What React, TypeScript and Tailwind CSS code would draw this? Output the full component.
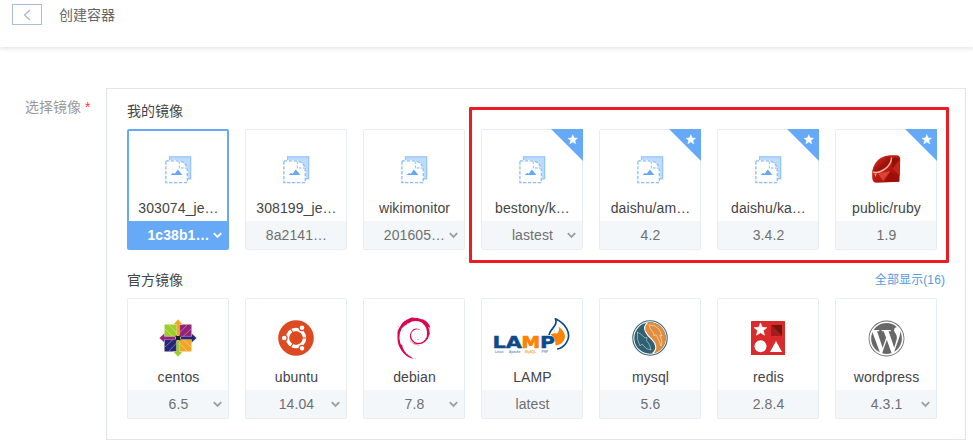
import React from "react";
import { SiDebian } from "react-icons/si";
import { FaWordpress } from "react-icons/fa";

const STAR = "M6 .6 7.5 4.3 11.4 4.6 8.4 7.1 9.4 11 6 8.9 2.6 11 3.6 7.1 .6 4.6 4.5 4.3Z";

function DefaultIcon() {
  return (
    <svg width="27" height="28" viewBox="0 0 27 28" fill="none" className="relative top-px">
      <rect x="4.5" y="0.8" width="21.2" height="22" fill="#bfdbfb" stroke="#93c3fa" strokeWidth="1.2" />
      <path d="M0 4H14L23 13V28H0Z" fill="#fff" />
      <path d="M0.9 4.9H13Q22 5.5 22.3 15V26.6H0.9Z" fill="#fff" stroke="#8abdf8" strokeWidth="1.3" strokeDasharray="3.4 1.5" />
      <path d="M14.4 5.5V12H21.5" stroke="#a3ccfa" strokeWidth="1.3" strokeDasharray="2.6 1.4" />
      <path d="M5.5 18.9 8 17 9.8 17.8 12.8 13.6 17.4 18.9Z" fill="#62a7f8" />
    </svg>
  );
}

function RubyIcon() {
  return (
    <svg width="30" height="30" viewBox="0 0 30 30">
      <defs>
        <linearGradient id="ruby" x1="0" y1="0" x2="1" y2="1">
          <stop offset="0" stopColor="#d5392c" />
          <stop offset="0.45" stopColor="#c01b12" />
          <stop offset="1" stopColor="#8d0c06" />
        </linearGradient>
        <linearGradient id="rubyTop" x1="0" y1="0" x2="1" y2="1">
          <stop offset="0" stopColor="#d63a2c" />
          <stop offset="0.6" stopColor="#9e0e08" />
          <stop offset="1" stopColor="#b91b12" />
        </linearGradient>
      </defs>
      <path d="M9.5 4Q15 .8 20 1.2L26 1.2Q29.6 2 29.2 6L28.4 27.8 5 28.8Q1.2 28.5 1.2 23V17Q3 8 9.5 4Z" fill="url(#ruby)" />
      <path d="M2 17Q4.5 8 11 4.2 18 1 20 4 20.5 9 14 14 7 19 2 17Z" fill="url(#rubyTop)" />
      <path d="M20.2 3.2 28.6 4.5 21.5 14.5Z" fill="#96100a" />
      <path d="M7 19.5 12 27 19.5 17Z" fill="#d94432" />
      <path d="M20 17 28.3 27.3 13.5 27.7Z" fill="#9c0f09" />
      <path d="M21.5 14.5 28.8 6V22Z" fill="#c4241a" />
      <path d="M2 17.8Q7 20 14.5 14.6 20.4 10 20.6 3.6" fill="none" stroke="#f0b9ac" strokeWidth="1.4" />
      <path d="M3 19.5 5.5 19.6 4.8 23Z" fill="#eda092" />
    </svg>
  );
}

function CentosIcon() {
  return (
    <svg width="38" height="38" viewBox="0 0 38 38">
      <rect x="5.5" y="5.5" width="12.5" height="12.5" fill="#9ccd2a" />
      <rect x="20" y="5.5" width="12.5" height="12.5" fill="#932279" />
      <rect x="5.5" y="20" width="12.5" height="12.5" fill="#262577" />
      <rect x="20" y="20" width="12.5" height="12.5" fill="#efa724" />
      <g fill="none" stroke="#fff" strokeOpacity=".5" strokeWidth=".7">
        <path d="M6 10 15 18.5M10 6l8.5 9M32 10l-9 8.5M28 6l-8.5 9M6 28l9-8.5M10 32l8.5-9M32 28l-9-8.5M28 32l-8.5-9" />
      </g>
      <path d="M17.4 17V5.5H14.2L19 .3 23.8 5.5H20.6V17Z" fill="#efa724" stroke="#fff" strokeWidth=".3" />
      <path d="M21 17.4H32.5V14.2L37.7 19 32.5 23.8V20.6H21Z" fill="#262577" stroke="#fff" strokeWidth=".3" />
      <path d="M17.4 21V32.5H14.2L19 37.7 23.8 32.5H20.6V21Z" fill="#9ccd2a" stroke="#fff" strokeWidth=".3" />
      <path d="M17 17.4H5.5V14.2L.3 19 5.5 23.8V20.6H17Z" fill="#932279" stroke="#fff" strokeWidth=".3" />
      <rect x="16.6" y="16.6" width="4.8" height="4.8" fill="#181818" />
      <path d="M18.3 16.6h1.4M18.3 21.4h1.4M16.6 18.3v1.4M21.4 18.3v1.4" stroke="#fff" strokeWidth=".9" />
    </svg>
  );
}

function UbuntuIcon() {
  return (
    <svg width="36" height="36" viewBox="0 0 36 36">
      <circle cx="18" cy="18" r="17.8" fill="#dd4a21" />
      <circle cx="18" cy="18" r="8.5" fill="none" stroke="#fff" strokeWidth="3.6" />
      <g stroke="#dd4a21" strokeWidth="1.1">
        <path d="M18 18H31M18 18 11.5 6.8M18 18 11.5 29.2" />
      </g>
      <circle cx="18" cy="18" r="6.5" fill="#dd4a21" />
      <g fill="#fff" stroke="#dd4a21" strokeWidth="1.2">
        <circle cx="6.2" cy="18" r="2.9" />
        <circle cx="24" cy="7.8" r="2.9" />
        <circle cx="24" cy="28.2" r="2.9" />
      </g>
    </svg>
  );
}

function LampIcon() {
  return (
    <svg width="80" height="40" viewBox="0 0 80 40" className="shrink-0">
      <g fontFamily="'DejaVu Sans', sans-serif" fontWeight="700" fontSize="15.5">
        <text x="0.5" y="30" textLength="29.5" lengthAdjust="spacingAndGlyphs" fill="#0c4a8c" stroke="#0c4a8c" strokeWidth=".4">LA</text>
        <text x="29.5" y="30" textLength="18.5" lengthAdjust="spacingAndGlyphs" fill="#ff8205" stroke="#ff8205" strokeWidth=".7">M</text>
        <text x="48" y="30" textLength="15" lengthAdjust="spacingAndGlyphs" fill="#0c4a8c" stroke="#0c4a8c" strokeWidth=".4">P</text>
      </g>
      <g fontFamily="'Liberation Sans', sans-serif" fontSize="3.2" fontWeight="700" fill="#7d95b4">
        <text x="3" y="35.3">Linux</text>
        <text x="17" y="35.3">Apache</text>
        <text x="33" y="35.3" fill="#ff9d3b">MySQL</text>
        <text x="49.5" y="35.3">PHP</text>
      </g>
      <path d="M66.5 8.5Q73.5 14 73 19 72 26 63.5 27.5 64 20 58.5 16.5 62.5 14.5 65 15.5 68 13 66.5 8.5Z" fill="#ff8205" />
      <path d="M57 17C58 10 66 9 63.5 .8 74 6 79 15 75.5 22.5 73 28.5 67.5 31 65 31" fill="none" stroke="#0c4a8c" strokeWidth="1.7" />
    </svg>
  );
}

function MysqlIcon() {
  return (
    <svg width="36" height="36" viewBox="0 0 36 36">
      <circle cx="18" cy="18" r="17.2" fill="#fff" stroke="#3b6675" strokeWidth="1.1" />
      <circle cx="18" cy="18" r="15.7" fill="#2f6172" />
      <path d="M15.4 2.5C8.5 9 16 16 19.8 19.4 24.5 24 25.5 29 20.5 33.5A15.7 15.7 0 0 0 15.4 2.5Z" fill="#e08e3e" />
      <path d="M15.4 2.5C8.5 9 16 16 19.8 19.4 24.5 24 25.5 29 20.5 33.5" fill="none" stroke="#fff" strokeWidth="1.1" />
      <path d="M17 5Q23 4.5 27 9L30 16 27.7 15Q31 22 29 26M17 5Q17.5 9 21.5 13L22 16 24 14.5Q27 20 29 26" fill="none" stroke="#fff" strokeOpacity=".65" strokeWidth=".7" />
      <path d="M5.5 12Q4.5 20 8 26L10 24Q14 30 19 30M5.5 12Q9 14 13 18L15 17.5 14.5 20.5Q18 24 19 30" fill="none" stroke="#fff" strokeOpacity=".65" strokeWidth=".7" />
    </svg>
  );
}

function RedisIcon() {
  return (
    <svg width="34" height="34" viewBox="0 0 34 34">
      <rect width="34" height="34" rx=".5" fill="#d92b2b" />
      <path d={STAR} transform="translate(2.4 1.2) scale(1.18)" fill="#fff" stroke="#fff" strokeWidth=".5" />
      <path d="M20 4H31V15Z" fill="#741411" />
      <path d="M20 4V15H31Z" fill="#a51d1b" />
      <circle cx="9.5" cy="25.2" r="6" fill="#fff" />
      <path d="M25 20 31 31H19Z" fill="#fff" />
    </svg>
  );
}

type Item = {
  name: string;
  tag: string;
  icon: React.ReactNode;
  menu?: boolean;
  starred?: boolean;
  selected?: boolean;
};

const mine: Item[] = [
  { name: "303074_je…", tag: "1c38b1…", icon: <DefaultIcon />, menu: true, selected: true },
  { name: "308199_je…", tag: "8a2141…", icon: <DefaultIcon /> },
  { name: "wikimonitor", tag: "201605…", icon: <DefaultIcon />, menu: true },
  { name: "bestony/k…", tag: "lastest", icon: <DefaultIcon />, menu: true, starred: true },
  { name: "daishu/am…", tag: "4.2", icon: <DefaultIcon />, starred: true },
  { name: "daishu/ka…", tag: "3.4.2", icon: <DefaultIcon />, starred: true },
  { name: "public/ruby", tag: "1.9", icon: <RubyIcon />, starred: true },
];

const official: Item[] = [
  { name: "centos", tag: "6.5", icon: <CentosIcon />, menu: true },
  { name: "ubuntu", tag: "14.04", icon: <UbuntuIcon />, menu: true },
  { name: "debian", tag: "7.8", icon: <SiDebian size={42} color="#d70751" className="shrink-0" />, menu: true },
  { name: "LAMP", tag: "latest", icon: <LampIcon /> },
  { name: "mysql", tag: "5.6", icon: <MysqlIcon /> },
  { name: "redis", tag: "2.8.4", icon: <RedisIcon /> },
  { name: "wordpress", tag: "4.3.1", icon: <FaWordpress size={37} color="#686868" />, menu: true },
];

function Card({ item }: { item: Item }) {
  return (
    <div
      className={`relative flex h-[121px] w-[102px] flex-col rounded-[2px] ${
        item.selected ? "border-2 border-[#66a9f7] pt-[18px]" : "border border-[#e7eef3] pt-[19px]"
      }`}
    >
      <div className="flex h-10 items-center justify-center">{item.icon}</div>
      <div className="mt-[9px] h-5 whitespace-nowrap pl-px text-center leading-5 tracking-[0.1px] text-[#444]">{item.name}</div>
      <div
        className={`relative mt-auto whitespace-nowrap pl-px text-center leading-7 tracking-[0.1px] ${
          item.selected ? "h-[27px] bg-[#66a9f7] font-bold text-white" : "h-7 bg-[#f3f7fa] text-[#6f6f6f]"
        }`}
      >
        {item.tag}
        {item.menu && (
          <svg
            className={`absolute top-[11px] ${item.selected ? "right-[5px]" : "right-[6px]"}`}
            width="9"
            height="7"
            viewBox="0 0 9 7"
            fill="none"
            stroke={item.selected ? "#fff" : "#9b9fa2"}
            strokeWidth="1.9"
          >
            <path d="M.8 1.2 4.5 4.9 8.2 1.2" />
          </svg>
        )}
      </div>
      {item.starred && (
        <svg className="absolute -right-px -top-px" width="32" height="32" viewBox="0 0 32 32">
          <path d="M0 0H32V32Z" fill="#66a9f7" />
          <path d={STAR} transform="translate(16.4 5) scale(.9)" fill="#fff" stroke="#fff" strokeWidth=".4" />
        </svg>
      )}
    </div>
  );
}

export default function App() {
  return (
    <div className="h-[447px] w-[973px] overflow-hidden bg-white font-['Liberation_Sans','Noto_Sans_CJK_SC',sans-serif] text-sm">
      <header className="flex h-[47px] items-start pl-3 pt-1 shadow-[0_1px_5px_rgba(0,0,0,0.14)]">
        <button className="flex h-[21px] w-[30px] items-center justify-center border border-[#abbddc]">
          <svg width="8" height="12" viewBox="0 0 8 12" fill="none" stroke="#a5b7d5" strokeWidth="1.2">
            <path d="M7 1 1.5 6 7 11" />
          </svg>
        </button>
        <h1 className="ml-[17px] leading-[22px] text-[#666]">创建容器</h1>
      </header>
      <main className="flex pt-[41px]">
        <label className="w-[106px] pl-[25px] pt-2 leading-[22px] text-[#999]">
          选择镜像 <span className="text-[#ff3b3b]">*</span>
        </label>
        <section className="relative h-[352px] w-[860px] border border-[#e0e5ea] pl-5 pt-3">
          <h2 className="h-5 leading-5 text-[#444]">我的镜像</h2>
          <div className="mt-2 flex gap-4">
            {mine.map((i) => (
              <Card key={i.name} item={i} />
            ))}
          </div>
          <div className="mt-5 flex h-5 items-center justify-between pr-5">
            <h2 className="leading-5 text-[#444]">官方镜像</h2>
            <a className="text-xs tracking-[0.1px] text-[#559ae2]">全部显示(16)</a>
          </div>
          <div className="mt-2 flex gap-4">
            {official.map((i) => (
              <Card key={i.name} item={i} />
            ))}
          </div>
          <div className="pointer-events-none absolute left-[362px] top-[18px] h-[156px] w-[480px] rounded-[1px] border-[3px] border-[#ed1c24]" />
        </section>
      </main>
    </div>
  );
}
